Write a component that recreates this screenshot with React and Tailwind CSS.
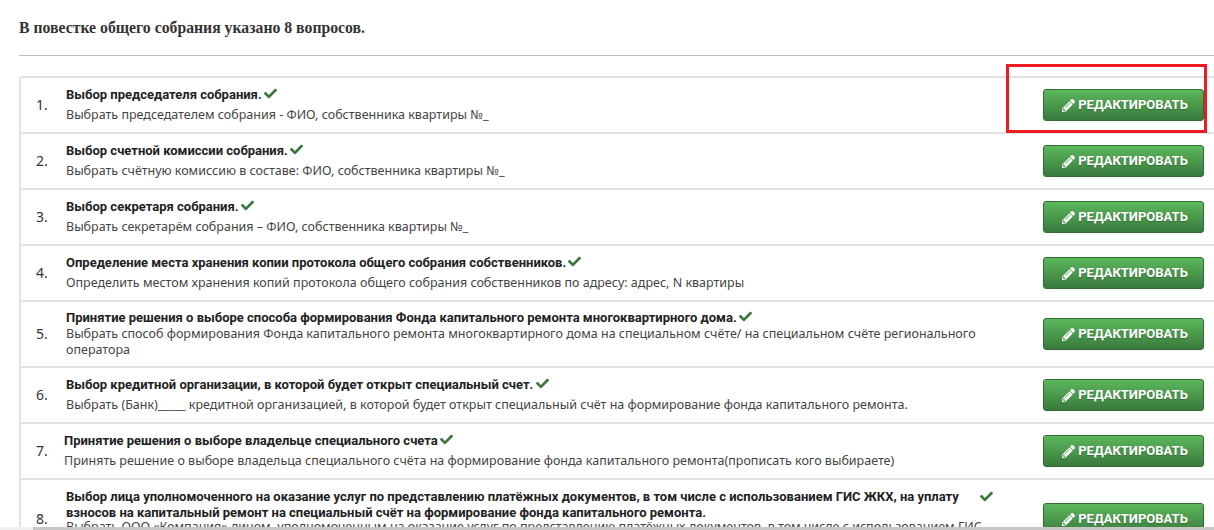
import React from "react";
import { FaCheck, FaPencilAlt } from "react-icons/fa";

const questions = [
  { n: 1, title: "Выбор председателя собрания.", text: "Выбрать председателем собрания - ФИО, собственника квартиры №_", h: "h-[56px]" },
  { n: 2, title: "Выбор счетной комиссии собрания.", text: "Выбрать счётную комиссию в составе: ФИО, собственника квартиры №_", h: "h-[56px]" },
  { n: 3, title: "Выбор секретаря собрания.", text: "Выбрать секретарём собрания – ФИО, собственника квартиры №_", h: "h-[56px]" },
  { n: 4, title: "Определение места хранения копии протокола общего собрания собственников.", text: "Определить местом хранения копий протокола общего собрания собственников по адресу: адрес, N квартиры", h: "h-[56px]" },
  { n: 5, title: "Принятие решения о выборе способа формирования Фонда капитального ремонта многоквартирного дома.", text: "Выбрать способ формирования Фонда капитального ремонта многоквартирного дома на специальном счёте/ на специальном счёте регионального оператора", h: "h-[66px]", tight: true },
  { n: 6, title: "Выбор кредитной организации, в которой будет открыт специальный счет.", text: "Выбрать (Банк)_____ кредитной организацией, в которой будет открыт специальный счёт на формирование фонда капитального ремонта.", h: "h-[56px]" },
  { n: 7, title: "Принятие решения о выборе владельце специального счета", text: "Принять решение о выборе владельца специального счёта на формирование фонда капитального ремонта(прописать кого выбираете)", h: "h-[56px]", shifted: true },
];

const EditButton = () => (
  <button className="flex h-[32px] w-[161px] shrink-0 items-center justify-center gap-[3px] rounded-[3px] border border-[#2f6b33] bg-gradient-to-b from-[#5cb85c] to-[#3a7a3d] pl-[3px] font-['Roboto',sans-serif] text-[13px] font-bold text-white">
    <FaPencilAlt className="text-[13px]" />
    <span className="[text-shadow:0_1px_1px_rgba(0,0,0,0.25)]">РЕДАКТИРОВАТЬ</span>
  </button>
);

const Row = ({ q }) => (
  <div className={`flex items-center border-b-2 border-[#e2e2e2] ${q.h}`}>
    <div className={`mt-[-2px] shrink-0 pl-[15px] text-[14px] text-[#333] ${q.shifted ? "w-[43px]" : "w-[45px]"}`}>{q.n}.</div>
    <div className="w-[922px] text-[12.5px] leading-[16px] text-[#444]">
      <div className="font-['Roboto',sans-serif] text-[13px] font-bold text-[#222]">
        {q.title} <FaCheck className="ml-[-1px] inline align-[-1px] text-[13px] text-[#3c763d]" />
      </div>
      <div className={q.tight ? "" : "mt-[4px]"}>{q.text}</div>
    </div>
    <div className="ml-auto pr-[10px]">
      <EditButton />
    </div>
  </div>
);

export default function App() {
  return (
    <div className="relative h-[530px] w-[1214px] overflow-hidden bg-white font-['Noto_Sans',sans-serif]">
      <div className="pl-[19px]">
        <div className="flex h-[56px] items-center border-b border-[#bdbdbd] font-['Liberation_Serif',serif] text-[15.75px] font-bold text-[#333]">
          В повестке общего собрания указано 8 вопросов.
        </div>
        <div className="mt-[20px] rounded-tl-[3px] border-l-2 border-t-2 border-[#e2e2e2]">
          {questions.map((q) => (
            <Row key={q.n} q={q} />
          ))}
          <div className="flex h-[60px] items-start">
            <div className="w-[45px] shrink-0 pl-[15px] pt-[28px] text-[14px] text-[#333]">8.</div>
            <div className="w-[927px] pt-[9px] text-[12.5px] leading-[16px] text-[#444]">
              <div className="flex items-start font-['Roboto',sans-serif] text-[13px] font-bold text-[#222]">
                <div className="w-[895px] shrink-0">
                  Выбор лица уполномоченного на оказание услуг по представлению платёжных документов, в том числе с использованием ГИС ЖКХ, на уплату взносов на капитальный ремонт на специальный счёт на формирование фонда капитального ремонта.
                </div>
                <FaCheck className="ml-[19px] mt-[1px] shrink-0 text-[13px] text-[#3c763d]" />
              </div>
              <div className="mt-[-2px]">Выбрать ООО «Компания» лицом, уполномоченным на оказание услуг по представлению платёжных документов, в том числе с использованием ГИС</div>
            </div>
            <div className="ml-auto pr-[10px] pt-[23px]">
              <EditButton />
            </div>
          </div>
        </div>
      </div>
      {/* red highlight over the first button */}
      <div className="absolute left-[1006px] top-[64px] h-[69px] w-[201px] border-[3px] border-[#ed1c24]" />
      {/* scrollbar at the bottom */}
      <div className="absolute bottom-0 left-0 h-[3px] w-full bg-[#f0f0f0]">
        <div className="ml-[33px] h-full w-[1181px] bg-[#c8c8c8]" />
      </div>
    </div>
  );
}
